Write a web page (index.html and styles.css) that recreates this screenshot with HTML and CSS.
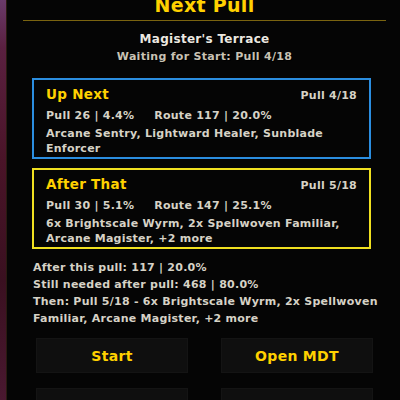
FILE: index.html
```html
<!DOCTYPE html>
<html lang="en">
<head>
    <meta charset="UTF-8">
    <meta name="viewport" content="width=device-width, initial-scale=1.0">
    <title>Next Pull</title>
    <link rel="stylesheet" href="styles.css">
</head>
<body>
    <div class="scene">
        <div class="backdrop"></div>
        <div class="frame">
            <h1 class="title">Next Pull</h1>
            <div class="rule"></div>

            <div class="dungeon">
                <div class="dungeon-name">Magister's Terrace</div>
                <div class="dungeon-status">Waiting for Start: Pull 4/18</div>
            </div>

            <div class="pull-box up-next">
                <div class="pull-head">
                    <span class="pull-label">Up Next</span>
                    <span class="pull-index">Pull 4/18</span>
                </div>
                <div class="pull-stats">
                    <span>Pull 26 | 4.4%</span>
                    <span class="stat-route">Route 117 | 20.0%</span>
                </div>
                <div class="pull-mobs">Arcane Sentry, Lightward Healer, Sunblade Enforcer</div>
            </div>

            <div class="pull-box after-that">
                <div class="pull-head">
                    <span class="pull-label">After That</span>
                    <span class="pull-index">Pull 5/18</span>
                </div>
                <div class="pull-stats">
                    <span>Pull 30 | 5.1%</span>
                    <span class="stat-route">Route 147 | 25.1%</span>
                </div>
                <div class="pull-mobs">6x Brightscale Wyrm, 2x Spellwoven Familiar, Arcane Magister, +2 more</div>
            </div>

            <div class="summary">
                <div>After this pull: 117 | 20.0%</div>
                <div>Still needed after pull: 468 | 80.0%</div>
                <div>Then: Pull 5/18 - 6x Brightscale Wyrm, 2x Spellwoven Familiar, Arcane Magister, +2 more</div>
            </div>

            <div class="actions">
                <button class="action">Start</button>
                <button class="action">Open MDT</button>
                <button class="action">Refresh</button>
                <button class="action">Reset</button>
            </div>
        </div>
    </div>
</body>
</html>
```

FILE: styles.css
```css
html, body {
    margin: 0;
    height: 100%;
    overflow: hidden;
}
body {
    background: #050505;
    font-family: "DejaVu Sans", sans-serif;
    color: #d6d2c6;
}
.scene {
    display: flex;
    height: 100%;
}
.backdrop {
    width: 6px;
    flex: none;
    background: linear-gradient(180deg, #6a3a6a 0%, #5a2040 12%, #4a1428 40%, #3a1020 70%, #4a1830 100%);
    border-right: 1px solid #2a1a10;
}
.frame {
    flex: 1;
    background: #050505;
    padding: 0 14px 0 16px;
    overflow: hidden;
}
.title {
    margin: -7px 0 0;
    text-align: center;
    font-size: 19px;
    line-height: 24px;
    color: #ffd100;
    font-weight: bold;
    letter-spacing: 0.3px;
}
.rule {
    height: 1px;
    background: #7a6410;
    margin: 3px 0 0;
}
.dungeon {
    text-align: center;
    margin-top: 9px;
    font-weight: bold;
    letter-spacing: 0.3px;
    text-shadow: 1px 1px 0 #000;
}
.dungeon-name {
    font-size: 12px;
    line-height: 18px;
    color: #ece8e0;
}
.dungeon-status {
    font-size: 11px;
    line-height: 18px;
    color: #c8c2b4;
}
.pull-box {
    margin: 12px 0 0 9px;
    width: 339px;
    padding: 4px 12px 1px 12px;
    box-sizing: border-box;
    border: 2px solid #2b8ee0;
    font-weight: bold;
    font-size: 11px;
    letter-spacing: 0.25px;
}
.after-that {
    border-color: #f0e020;
    margin-top: 9px;
}
.pull-head {
    display: flex;
    justify-content: space-between;
    align-items: baseline;
}
.pull-label {
    color: #ffd100;
    font-size: 13.5px;
    line-height: 20px;
    letter-spacing: 0.3px;
}
.pull-index {
    font-size: 11px;
    color: #d6d2c6;
}
.pull-stats {
    display: flex;
    margin-top: 4px;
    line-height: 16px;
}
.stat-route {
    margin-left: 20px;
}
.pull-mobs {
    line-height: 15px;
    margin-top: 2px;
}
.summary {
    margin: 10px 0 0 10px;
    font-size: 11px;
    font-weight: bold;
    line-height: 17px;
    letter-spacing: 0.25px;
    width: 345px;
}
.actions {
    display: grid;
    grid-template-columns: 152px 152px;
    column-gap: 33px;
    row-gap: 15px;
    margin: 11px 0 0 13px;
}
.action {
    height: 35px;
    background: #0f0f0f;
    border: 1px solid #141414;
    color: #ffd100;
    font-family: inherit;
    font-weight: bold;
    font-size: 14px;
    letter-spacing: 0.3px;
}
```
